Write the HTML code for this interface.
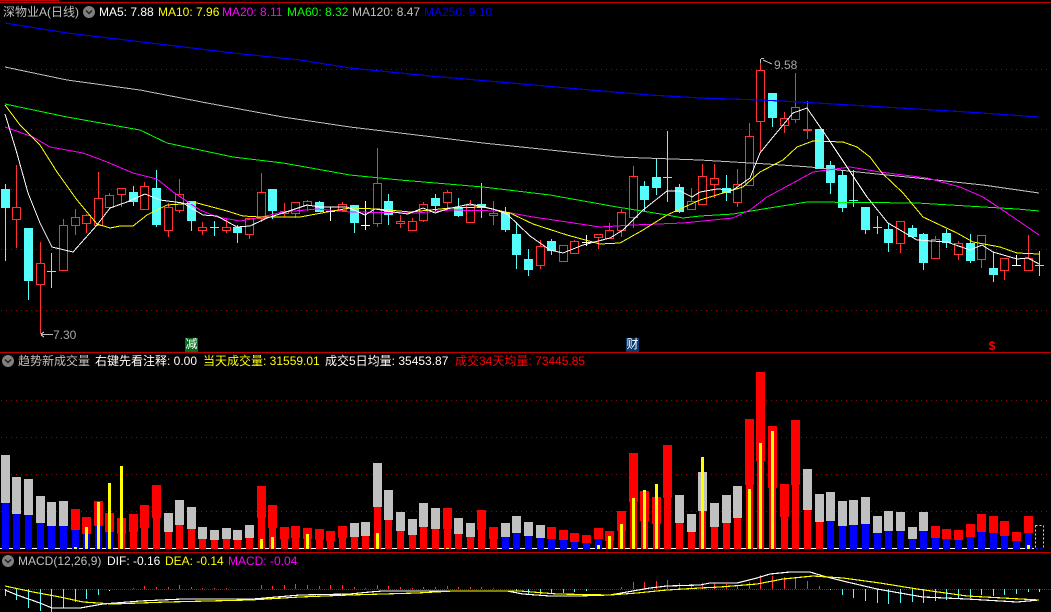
<!DOCTYPE html>
<html>
<head>
<meta charset="utf-8">
<style>
html,body{margin:0;padding:0;background:#000;width:1051px;height:612px;overflow:hidden}
svg{position:absolute;left:0;top:0}
svg *{shape-rendering:crispEdges}
.t{position:absolute;white-space:nowrap;font:12px/14px "Liberation Sans","WenQuanYi Zen Hei","Noto Sans CJK SC",sans-serif;height:14px}
</style>
</head>
<body>
<svg width="1051" height="612" viewBox="0 0 1051 612" fill="none">
<defs>
<pattern id="g" x="0" y="0" width="5" height="1" patternUnits="userSpaceOnUse"><rect x="1" y="0" width="1" height="1" fill="#a00000"/></pattern>
<pattern id="z" x="0" y="0" width="2" height="1" patternUnits="userSpaceOnUse"><rect x="0" y="0" width="1" height="1" fill="#d00000"/></pattern>
</defs>
<!-- borders -->
<path d="M0 2.5H1051M0 352.5H1051M0 552.5H1051M0 .5H58M58.5 0V2" stroke="#c00000"/>
<!-- grids -->
<rect x="0" y="69" width="1051" height="1" fill="url(#g)"/>
<rect x="0" y="129" width="1051" height="1" fill="url(#g)"/>
<rect x="0" y="189" width="1051" height="1" fill="url(#g)"/>
<rect x="0" y="249" width="1051" height="1" fill="url(#g)"/>
<rect x="0" y="310" width="1051" height="1" fill="url(#g)"/>
<rect x="0" y="400" width="1051" height="1" fill="url(#g)"/>
<rect x="0" y="437" width="1051" height="1" fill="url(#g)"/>
<rect x="0" y="474" width="1051" height="1" fill="url(#g)"/>
<rect x="0" y="511" width="1051" height="1" fill="url(#g)"/>
<rect x="0" y="589" width="1051" height="1" fill="url(#z)"/>
<!-- wicks -->
<path stroke="#54fcfc" d="M5.5 184V261M28.5 228V300M51.5 253V288M133.5 186V206M156.5 170V227M191.5 201V231M214.5 221V236M237.5 225V243M272.5 189V219M319.5 201V212M354.5 205V233M388.5 194V225M435.5 194V211M458.5 198V217M481.5 183V218M505.5 207V232M516.5 222V269M528.5 249V276M551.5 239V255M644.5 181V212M656.5 158V195M667.5 131V202M679.5 184V213M726.5 175V201M772.5 93V127M819.5 129V169M830.5 161V194M842.5 170V212M853.5 170V207M865.5 207V234M877.5 216V234M888.5 223V252M912.5 225V237M923.5 233V270M946.5 229V248M970.5 234V263M993.5 252V282M1039.5 251V276M47 271.5h9M210 227.5h9M849 200.5h9M873 227.5h9M1035 265.5h9M663 177.5h9"/>
<path stroke="#ff3232" d="M16.5 165V248M40.5 242V334M63.5 219V270M75.5 209V235M86.5 214V233M98.5 172V225M109.5 193V207M121.5 188V207M144.5 182V209M168.5 203V237M179.5 179V213M202.5 222V235M226.5 219V233M249.5 218V239M261.5 173V222M284.5 203V217M295.5 202V218M307.5 200V211M342.5 202V212M377.5 148V227M400.5 215V228M412.5 218V230M423.5 202V222M447.5 190V208M470.5 200V223M493.5 201V225M540.5 240V269M563.5 245V261M574.5 240V254M598.5 234V249M609.5 223V238M621.5 209V237M633.5 166V228M691.5 188V209M702.5 164V205M714.5 164V198M737.5 169V207M749.5 123V185M760.5 60V152M784.5 112V133M795.5 73V123M807.5 101V139M900.5 221V253M935.5 236V258M958.5 241V260M981.5 235V268M1004.5 258V280M1028.5 235V270M803 129.5h9M803 130.5h9"/>
<path stroke="#fff" d="M330.5 207V221M326 211.5h9M365.5 201V230M361 225.5h9M586.5 235V246M582 242.5h9M1016.5 255V265M1012 265.5h9"/>
<!-- bodies -->
<path fill="#54fcfc" d="M1 189h9v19h-9zM24 228h9v53h-9zM129 192h9v10h-9zM152 188h9v37h-9zM187 201h9v20h-9zM233 227h9v6h-9zM268 189h9v22h-9zM315 202h9v10h-9zM350 205h9v18h-9zM384 201h9v14h-9zM431 198h9v8h-9zM454 207h9v9h-9zM477 204h9v4h-9zM501 212h9v18h-9zM512 234h9v21h-9zM524 259h9v11h-9zM547 241h9v10h-9zM640 186h9v14h-9zM652 177h9v11h-9zM675 187h9v25h-9zM722 188h9v5h-9zM768 93h9v25h-9zM815 129h9v40h-9zM826 165h9v18h-9zM838 175h9v33h-9zM861 207h9v23h-9zM884 229h9v14h-9zM908 228h9v9h-9zM919 234h9v29h-9zM942 233h9v10h-9zM966 243h9v18h-9zM989 268h9v7h-9z"/>
<path fill="#000" stroke="#ff3232" d="M12.5 207.5h8v12h-8zM36.5 263.5h8v21h-8zM59.5 225.5h8v45h-8zM71.5 217.5h8v8h-8zM82.5 215.5h8v8h-8zM94.5 198.5h8v27h-8zM105.5 195.5h8v12h-8zM117.5 188.5h8v6h-8zM140.5 186.5h8v23h-8zM164.5 207.5h8v23h-8zM175.5 194.5h8v16h-8zM198.5 227.5h8v3h-8zM222.5 227.5h8v3h-8zM245.5 218.5h8v16h-8zM257.5 192.5h8v26h-8zM280.5 211.5h8v2h-8zM291.5 202.5h8v11h-8zM303.5 201.5h8v4h-8zM338.5 204.5h8v6h-8zM373.5 183.5h8v40h-8zM396.5 221.5h8v2h-8zM408.5 221.5h8v9h-8zM419.5 204.5h8v16h-8zM443.5 192.5h8v10h-8zM466.5 205.5h8v17h-8zM489.5 213.5h8v2h-8zM536.5 246.5h8v19h-8zM559.5 245.5h8v16h-8zM570.5 241.5h8v12h-8zM594.5 234.5h8v3h-8zM605.5 230.5h8v8h-8zM617.5 212.5h8v18h-8zM629.5 176.5h8v41h-8zM687.5 201.5h8v8h-8zM698.5 176.5h8v28h-8zM710.5 178.5h8v6h-8zM733.5 184.5h8v18h-8zM745.5 136.5h8v49h-8zM756.5 70.5h8v51h-8zM780.5 118.5h8v7h-8zM791.5 107.5h8v12h-8zM896.5 221.5h8v22h-8zM931.5 239.5h8v19h-8zM954.5 243.5h8v11h-8zM977.5 235.5h8v24h-8zM1000.5 258.5h8v12h-8zM1024.5 258.5h8v12h-8z"/>
<!-- MAs -->
<polyline stroke="#0000ff" stroke-width="1.15" points="5,23 67,33 167,45 233,53 300,60 350,68 430,76 500,82 567,88 650,95 700,98 760,100 800,102 867,106 967,112 1039,117"/>
<polyline stroke="#c0c0c0" points="5,67 67,80 140,90 207,103 283,117 350,127 400,133 483,143 550,150 617,157 700,160 767,164 810,167 877,174 917,178 983,185 1039,193"/>
<polyline stroke="#00ff00" points="5,104 67,117 140,130 167,143 233,157 283,163 350,175 400,180 483,187 550,195 617,207 667,215 683,218 700,216 733,214 757,210 807,202 917,203 967,206 1017,209 1039,211"/>
<polyline stroke="#ff00ff" points="5,127 33,137 50,147 83,153 107,162 133,173 157,179 173,192 200,210 217,217 240,221 257,218 283,212 317,209 350,212 417,213 450,210 500,211 533,217 567,222 600,227 633,225 683,223 733,218 750,210 767,197 793,183 813,172 850,167 880,172 927,178 960,187 983,197 1007,213 1039,235"/>
<polyline stroke="#ffff00" points="5,105 20,125 40,145 57,172 77,200 97,224 110,228 120,226 133,226 147,215 167,205 197,203 227,211 243,216 260,217 300,217 327,212 350,208 377,209 410,212 450,208 483,207 510,213 533,224 567,235 600,244 620,243 643,230 667,215 700,200 743,187 760,172 783,160 797,147 813,141 843,142 857,147 870,157 882,173 903,193 923,217 940,225 957,233 973,242 1000,247 1017,253 1039,254"/>
<polyline stroke="#ffffff" points="5,114 16,150 28,193 40,223 52,247 73,252 97,225 110,208 127,202 145,194 160,200 183,203 203,215 217,216 237,227 250,226 267,218 283,213 307,205 320,207 347,207 365,215 375,209 393,212 408,214 423,208 435,213 447,209 470,204 493,209 507,214 530,236 550,250 563,253 583,245 610,238 623,230 643,210 667,191 680,191 692,197 700,192 717,189 733,190 750,178 760,153 773,137 793,113 807,108 827,137 847,167 867,197 888,223 917,240 947,242 970,250 982,245 993,252 1017,259 1028,258 1039,264"/>
<!-- hi/lo marks -->
<path stroke="#c0c0c0" d="M761 58.5h3M760.5 59v4M763 60l9 4M41 334.5h12M41 334l3-2M41 335l3 2"/>
<!-- volume -->
<path stroke="#fff" d="M0 548.5H1034"/>
<path fill="#0000ff" d="M2 503h7V549h-7zM13 514h7V549h-7zM25 515h7V549h-7zM37 523h7V549h-7zM48 526h7V549h-7zM60 526h7V549h-7zM72 530h7V549h-7zM83 534h7V549h-7zM95 526h7V549h-7zM106 532h7V549h-7zM502 537h7V549h-7zM513 533h7V549h-7zM525 536h7V549h-7zM537 538h7V549h-7zM548 539h7V549h-7zM560 540h7V549h-7zM571 542h7V549h-7zM583 543h7V549h-7zM595 539h7V549h-7zM827 521h7V549h-7zM839 526h7V549h-7zM850 525h7V549h-7zM862 524h7V549h-7zM874 533h7V549h-7zM885 531h7V549h-7zM897 531h7V549h-7zM909 539h7V549h-7zM920 531h7V549h-7zM932 538h7V549h-7zM943 539h7V549h-7zM955 540h7V549h-7zM967 537h7V549h-7zM978 532h7V549h-7zM990 533h7V549h-7zM1001 536h7V549h-7zM1013 541h7V549h-7zM1025 533h7V549h-7z"/>
<path fill="#ff0000" d="M118 534h7V549h-7zM130 532h7V549h-7zM141 528h7V549h-7zM153 518h7V549h-7zM165 532h7V549h-7zM176 525h7V549h-7zM188 529h7V549h-7zM199 539h7V549h-7zM211 540h7V549h-7zM223 539h7V549h-7zM234 540h7V549h-7zM246 538h7V549h-7zM258 518h7V549h-7zM269 528h7V549h-7zM281 539h7V549h-7zM292 538h7V549h-7zM304 539h7V549h-7zM316 540h7V549h-7zM327 541h7V549h-7zM339 538h7V549h-7zM351 537h7V549h-7zM362 536h7V549h-7zM374 507h7V549h-7zM385 520h7V549h-7zM397 531h7V549h-7zM409 535h7V549h-7zM420 527h7V549h-7zM432 529h7V549h-7zM444 529h7V549h-7zM455 534h7V549h-7zM467 537h7V549h-7zM478 530h7V549h-7zM490 539h7V549h-7zM606 541h7V549h-7zM618 531h7V549h-7zM630 502h7V549h-7zM641 521h7V549h-7zM653 524h7V549h-7zM664 498h7V549h-7zM676 523h7V549h-7zM688 532h7V549h-7zM699 511h7V549h-7zM711 527h7V549h-7zM723 523h7V549h-7zM734 518h7V549h-7zM746 485h7V549h-7zM757 461h7V549h-7zM769 488h7V549h-7zM781 517h7V549h-7zM792 485h7V549h-7zM804 510h7V549h-7zM816 522h7V549h-7z"/>
<path fill="#c0c0c0" d="M1 455h9v48h-9zM12 477h9v37h-9zM24 479h9v36h-9zM36 496h9v27h-9zM47 502h9v24h-9zM59 501h9v25h-9zM164 513h9v19h-9zM175 500h9v25h-9zM187 507h9v22h-9zM198 527h9v12h-9zM210 530h9v10h-9zM222 528h9v11h-9zM233 530h9v10h-9zM245 525h9v13h-9zM350 523h9v14h-9zM361 522h9v14h-9zM373 463h9v44h-9zM384 490h9v30h-9zM396 512h9v19h-9zM408 519h9v16h-9zM419 503h9v24h-9zM431 508h9v21h-9zM454 518h9v16h-9zM466 523h9v14h-9zM501 523h9v14h-9zM512 516h9v17h-9zM524 522h9v14h-9zM536 525h9v13h-9zM675 495h9v28h-9zM687 514h9v18h-9zM698 472h9v39h-9zM710 503h9v24h-9zM722 495h9v28h-9zM733 486h9v32h-9zM803 469h9v41h-9zM815 494h9v28h-9zM826 492h9v29h-9zM838 501h9v25h-9zM849 500h9v25h-9zM861 497h9v27h-9zM873 516h9v17h-9zM884 511h9v20h-9zM896 512h9v19h-9zM908 527h9v12h-9zM919 512h9v19h-9z"/>
<path fill="#ff0000" d="M71 509h9v21h-9zM82 517h9v17h-9zM94 501h9v25h-9zM105 513h9v19h-9zM117 518h9v16h-9zM129 514h9v18h-9zM140 505h9v23h-9zM152 485h9v33h-9zM257 486h9v32h-9zM268 505h9v23h-9zM280 527h9v12h-9zM291 526h9v12h-9zM303 528h9v11h-9zM315 529h9v11h-9zM326 531h9v10h-9zM338 526h9v12h-9zM443 508h9v21h-9zM477 510h9v20h-9zM489 527h9v12h-9zM547 527h9v12h-9zM559 530h9v10h-9zM570 533h9v9h-9zM582 535h9v8h-9zM594 528h9v11h-9zM605 531h9v10h-9zM617 511h9v20h-9zM629 453h9v49h-9zM640 491h9v30h-9zM652 497h9v27h-9zM663 445h9v53h-9zM745 419h9v66h-9zM756 372h9v89h-9zM768 426h9v62h-9zM780 484h9v33h-9zM791 420h9v65h-9zM931 526h9v12h-9zM942 529h9v10h-9zM954 530h9v10h-9zM966 524h9v13h-9zM977 514h9v18h-9zM989 516h9v17h-9zM1000 521h9v15h-9zM1012 532h9v9h-9zM1024 516h9v17h-9z"/>
<path fill="#ffff00" d="M74 547h3V549h-3zM85 527h3V549h-3zM97 502h3V549h-3zM108 483h3V549h-3zM120 466h3V549h-3zM260 539h3V549h-3zM271 537h3V549h-3zM306 534h3V549h-3zM376 533h3V549h-3zM446 548h3V549h-3zM597 545h3V549h-3zM608 536h3V549h-3zM620 524h3V549h-3zM632 498h3V549h-3zM643 490h3V549h-3zM655 484h3V549h-3zM701 457h3V549h-3zM748 489h3V549h-3zM759 443h3V549h-3zM771 431h3V549h-3zM1027 545h3V549h-3z"/>
<path stroke="#e8e800" stroke-dasharray="2 2" d="M1035.5 525.5h8M1043.5 525.5v23M1035.5 525.5v23"/>
<path stroke="#0000ff" stroke-dasharray="2 2" d="M1036 548.5h8"/>
<!-- MACD sticks -->
<path stroke="#54fcfc" d="M5.5 589V596M16.5 589V600M28.5 589V608M40.5 589V611M51.5 589V612M63.5 589V608M75.5 589V602M86.5 589V599M98.5 589V595M516.5 589V591M528.5 589V595M540.5 589V594M551.5 589V593M563.5 589V593M574.5 589V592M586.5 589V591M830.5 589V590M842.5 589V595M853.5 589V598M865.5 589V601M877.5 589V603M888.5 589V604M900.5 589V603M912.5 589V602M923.5 589V603M935.5 589V601M946.5 589V600M958.5 589V598M970.5 589V598M981.5 589V595M993.5 589V596M1004.5 589V595M1016.5 589V594M1028.5 589V592M1039.5 589V592"/>
<path stroke="#ff3232" d="M133.5 589V588M144.5 589V586M156.5 589V587M168.5 589V587M179.5 589V585M191.5 589V587M202.5 589V588M214.5 589V588M226.5 589V588M261.5 589V585M272.5 589V586M284.5 589V585M295.5 589V584M307.5 589V585M319.5 589V586M330.5 589V585M342.5 589V585M354.5 589V587M365.5 589V588M377.5 589V585M388.5 589V586M400.5 589V587M412.5 589V588M423.5 589V587M435.5 589V587M447.5 589V586M458.5 589V587M470.5 589V587M481.5 589V587M493.5 589V588M621.5 589V587M633.5 589V582M644.5 589V582M656.5 589V581M667.5 589V580M679.5 589V583M691.5 589V584M702.5 589V583M714.5 589V583M726.5 589V584M737.5 589V585M749.5 589V582M760.5 589V575M772.5 589V576M784.5 589V577M795.5 589V578M807.5 589V581M819.5 589V586"/>
<path stroke="#fff" d="M109.5 590v1"/>
<polyline stroke="#ffffff" stroke-width="1.15" points="5,590 17,595 40,603 52,608 80,608 103,604 140,601 183,599 253,599 300,595 350,594 370,592 383,591 443,591 507,591 523,594 550,596 577,596 610,595 627,592 650,588 667,586 700,585 710,583 737,583 757,578 770,574 790,572 810,572 823,576 847,582 877,589 900,593 923,597 967,599 1017,602 1039,600"/>
<polyline stroke="#ffff00" stroke-width="1.15" points="5,586 33,592 60,597 83,602 113,604 167,602 250,600 300,597 350,595 383,594 417,593 453,591 520,591 557,594 610,595 637,593 667,590 700,588 720,587 757,584 783,579 813,576 843,578 880,583 917,589 967,596 1039,600"/>
<!-- tags -->
<rect x="185" y="338" width="13" height="14" fill="#00701e"/>
<rect x="626" y="338" width="13" height="14" fill="#0a3a72"/>
<!-- collapse circles -->
<circle cx="89" cy="12" r="6" fill="#808080" style="shape-rendering:auto"/>
<path d="M86 10.5l3 3 3-3" stroke="#222" stroke-width="1.5" style="shape-rendering:auto"/>
<circle cx="8" cy="361" r="6" fill="#808080" style="shape-rendering:auto"/>
<path d="M5 359.5l3 3 3-3" stroke="#222" stroke-width="1.5" style="shape-rendering:auto"/>
<circle cx="8" cy="561" r="6" fill="#808080" style="shape-rendering:auto"/>
<path d="M5 559.5l3 3 3-3" stroke="#222" stroke-width="1.5" style="shape-rendering:auto"/>
</svg>

<div class="t" style="left:3px;top:5px;color:#c0c0c0">深物业A(日线)</div>
<div class="t" style="left:99px;top:5px;color:#fff">MA5: 7.88</div>
<div class="t" style="left:158px;top:5px;color:#ff0">MA10: 7.96</div>
<div class="t" style="left:222px;top:5px;color:#f0f">MA20: 8.11</div>
<div class="t" style="left:287px;top:5px;color:#0f0">MA60: 8.32</div>
<div class="t" style="left:352px;top:5px;color:#c0c0c0">MA120: 8.47</div>
<div class="t" style="left:424px;top:5px;color:#0000e6">MA250: 9.10</div>

<div class="t" style="left:774px;top:58px;color:#a8a8a8">9.58</div>
<div class="t" style="left:53px;top:328px;color:#a8a8a8">7.30</div>
<div class="t" style="left:185px;top:337px;width:13px;text-align:center;color:#fff">减</div>
<div class="t" style="left:626px;top:337px;width:13px;text-align:center;color:#fff">财</div>
<div class="t" style="left:986px;top:339px;width:12px;text-align:center;color:#f00;font-weight:bold">$</div>

<div class="t" style="left:18px;top:354px;color:#c0c0c0">趋势新成交量</div>
<div class="t" style="left:95px;top:354px;color:#fff">右键先看注释: 0.00</div>
<div class="t" style="left:203px;top:354px;color:#ff0">当天成交量: 31559.01</div>
<div class="t" style="left:325px;top:354px;color:#fff">成交5日均量: 35453.87</div>
<div class="t" style="left:455px;top:354px;color:#f00">成交34天均量: 73445.85</div>

<div class="t" style="left:18px;top:554px;color:#c0c0c0">MACD(12,26,9)</div>
<div class="t" style="left:107px;top:554px;color:#fff">DIF: -0.16</div>
<div class="t" style="left:165px;top:554px;color:#ff0">DEA: -0.14</div>
<div class="t" style="left:228px;top:554px;color:#f0f">MACD: -0.04</div>
</body>
</html>
